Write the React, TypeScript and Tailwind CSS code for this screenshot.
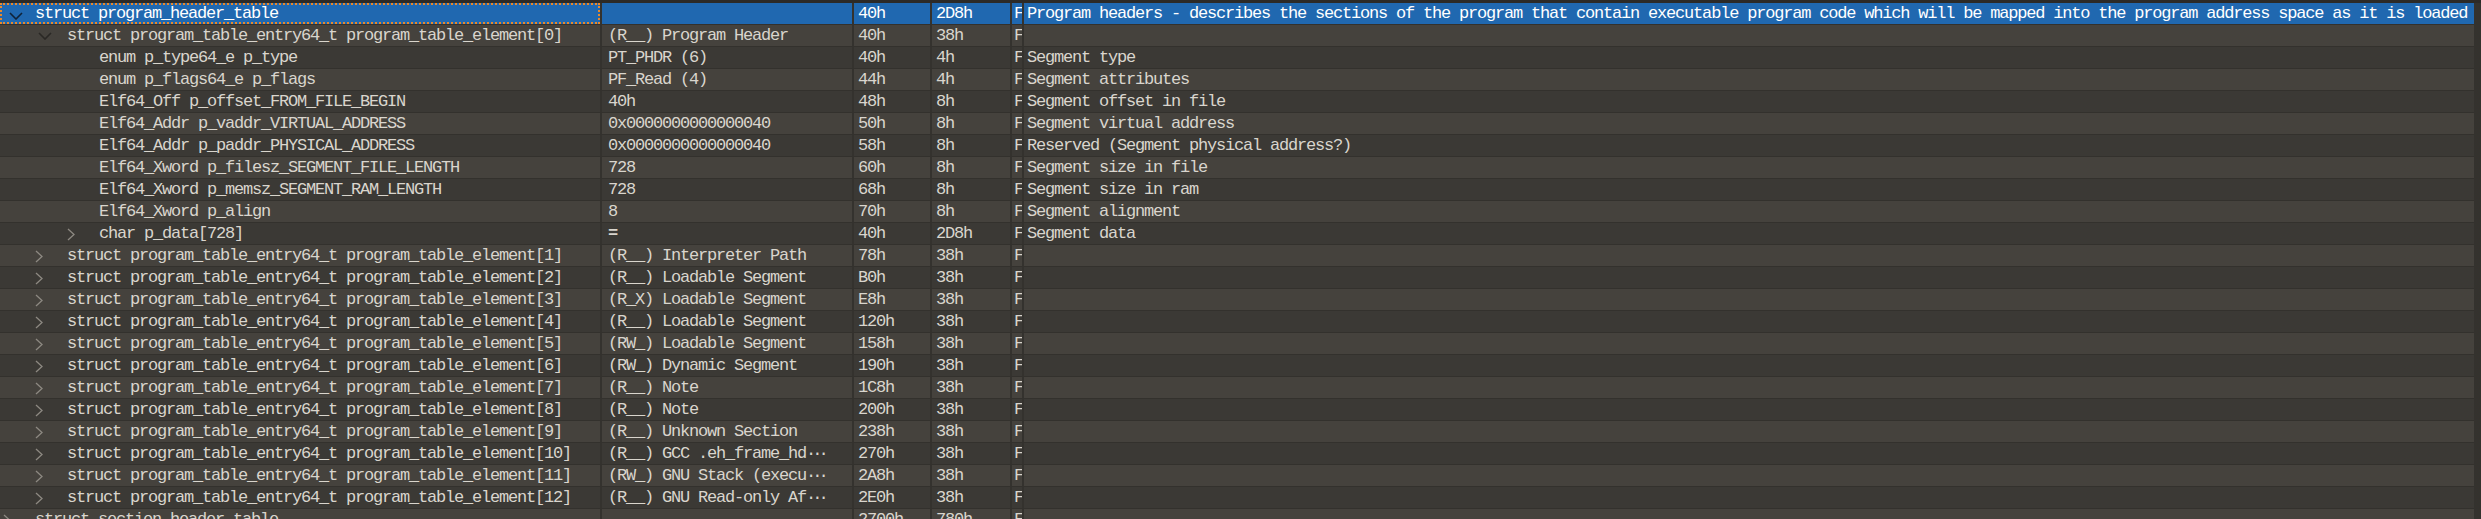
import React from "react";

type Row = {
  depth: number;
  node?: "open" | "closed";
  name: string;
  value: string;
  start: string;
  size: string;
  comment: string;
};

const rows: Row[] = [
  {
    depth: 0,
    node: "open",
    name: "struct program_header_table",
    value: "",
    start: "40h",
    size: "2D8h",
    comment:
      "Program headers - describes the sections of the program that contain executable program code which will be mapped into the program address space as it is loaded",
  },
  { depth: 1, node: "open", name: "struct program_table_entry64_t program_table_element[0]", value: "(R__) Program Header", start: "40h", size: "38h", comment: "" },
  { depth: 2, name: "enum p_type64_e p_type", value: "PT_PHDR (6)", start: "40h", size: "4h", comment: "Segment type" },
  { depth: 2, name: "enum p_flags64_e p_flags", value: "PF_Read (4)", start: "44h", size: "4h", comment: "Segment attributes" },
  { depth: 2, name: "Elf64_Off p_offset_FROM_FILE_BEGIN", value: "40h", start: "48h", size: "8h", comment: "Segment offset in file" },
  { depth: 2, name: "Elf64_Addr p_vaddr_VIRTUAL_ADDRESS", value: "0x0000000000000040", start: "50h", size: "8h", comment: "Segment virtual address" },
  { depth: 2, name: "Elf64_Addr p_paddr_PHYSICAL_ADDRESS", value: "0x0000000000000040", start: "58h", size: "8h", comment: "Reserved (Segment physical address?)" },
  { depth: 2, name: "Elf64_Xword p_filesz_SEGMENT_FILE_LENGTH", value: "728", start: "60h", size: "8h", comment: "Segment size in file" },
  { depth: 2, name: "Elf64_Xword p_memsz_SEGMENT_RAM_LENGTH", value: "728", start: "68h", size: "8h", comment: "Segment size in ram" },
  { depth: 2, name: "Elf64_Xword p_align", value: "8", start: "70h", size: "8h", comment: "Segment alignment" },
  { depth: 2, node: "closed", name: "char p_data[728]", value: "=", start: "40h", size: "2D8h", comment: "Segment data" },
];

const elements: [string, string][] = [
  ["(R__) Interpreter Path", "78h"],
  ["(R__) Loadable Segment", "B0h"],
  ["(R_X) Loadable Segment", "E8h"],
  ["(R__) Loadable Segment", "120h"],
  ["(RW_) Loadable Segment", "158h"],
  ["(RW_) Dynamic Segment", "190h"],
  ["(R__) Note", "1C8h"],
  ["(R__) Note", "200h"],
  ["(R__) Unknown Section", "238h"],
  ["(R__) GCC .eh_frame_hd…", "270h"],
  ["(RW_) GNU Stack (execu…", "2A8h"],
  ["(R__) GNU Read-only Af…", "2E0h"],
];

elements.forEach(([value, start], i) =>
  rows.push({
    depth: 1,
    node: "closed",
    name: `struct program_table_entry64_t program_table_element[${i + 1}]`,
    value,
    start,
    size: "38h",
    comment: "",
  })
);

rows.push({ depth: 0, node: "closed", name: "struct section_header_table", value: "", start: "2700h", size: "780h", comment: "" });

const Chevron = ({ node, depth, selected }: { node: "open" | "closed"; depth: number; selected: boolean }) =>
  node === "open" ? (
    <svg
      className="absolute top-[7px]"
      style={{ left: 7 + depth * 31 }}
      width="14"
      height="8"
      viewBox="0 0 14 8"
    >
      <polyline points="1,1 7,7 13,1" fill="none" stroke={selected ? "#0f2238" : "#2a2825"} strokeWidth="1.6" />
    </svg>
  ) : (
    <svg
      className="absolute top-[5px]"
      style={{ left: 3 + depth * 32 }}
      width="8"
      height="13"
      viewBox="0 0 8 13"
    >
      <polyline points="1,1 7,6.5 1,12" fill="none" stroke="#8d8982" strokeWidth="1.3" />
    </svg>
  );

// Qt-style elided text: the ellipsis sits at mid height in the reference font
const Value = ({ text }: { text: string }) => {
  if (text === "=") return <span className="font-bold">=</span>;
  if (!text.endsWith("…")) return <>{text}</>;
  return (
    <>
      {text.slice(0, -1)}
      <span className="tracking-[-4px]">···</span>
    </>
  );
};

const App = () => {
  return (
    <div className="h-[519px] w-[2481px] overflow-hidden bg-[#34322e] font-['Liberation_Mono',monospace] text-[17px] tracking-[-1.2px] text-[#d9d5cd]">
      <div className="h-[3px] bg-[#2c2a27]" />
      {rows.map((row, i) => {
        const selected = i === 0;
        const bg = selected ? "bg-[#2068b0]" : i % 2 === 1 ? "bg-[#45423d]" : "bg-[#3b3935]";
        const text = selected ? "text-white" : "";
        return (
          <div key={i} className="flex h-[22px] w-[2474px] gap-[2px] border-b border-[#33312d] leading-[21px]">
            <div
              className={`relative w-[600px] shrink-0 whitespace-nowrap ${bg} ${text} ${
                selected ? "border-2 border-dotted border-[#e8892c]" : ""
              }`}
            >
              {row.node && <Chevron node={row.node} depth={row.depth} selected={selected} />}
              <span className={`absolute ${selected ? "top-[-2px]" : "top-0"}`} style={{ left: 35 + row.depth * 32 - (selected ? 2 : 0) }}>
                {row.name}
              </span>
            </div>
            <div className={`w-[250px] shrink-0 overflow-hidden whitespace-nowrap pl-[6px] ${bg} ${text}`}>
              <Value text={row.value} />
            </div>
            <div className={`w-[76px] shrink-0 whitespace-nowrap pl-[4px] ${bg} ${text}`}>{row.start}</div>
            <div className={`w-[78px] shrink-0 whitespace-nowrap pl-[4px] ${bg} ${text}`}>{row.size}</div>
            <div className={`w-[10px] shrink-0 overflow-hidden whitespace-nowrap pl-[2px] ${bg} ${text}`}>F</div>
            <div className={`flex-1 overflow-hidden whitespace-nowrap pl-[3px] ${bg} ${text}`}>{row.comment}</div>
          </div>
        );
      })}
    </div>
  );
};

export default App;
